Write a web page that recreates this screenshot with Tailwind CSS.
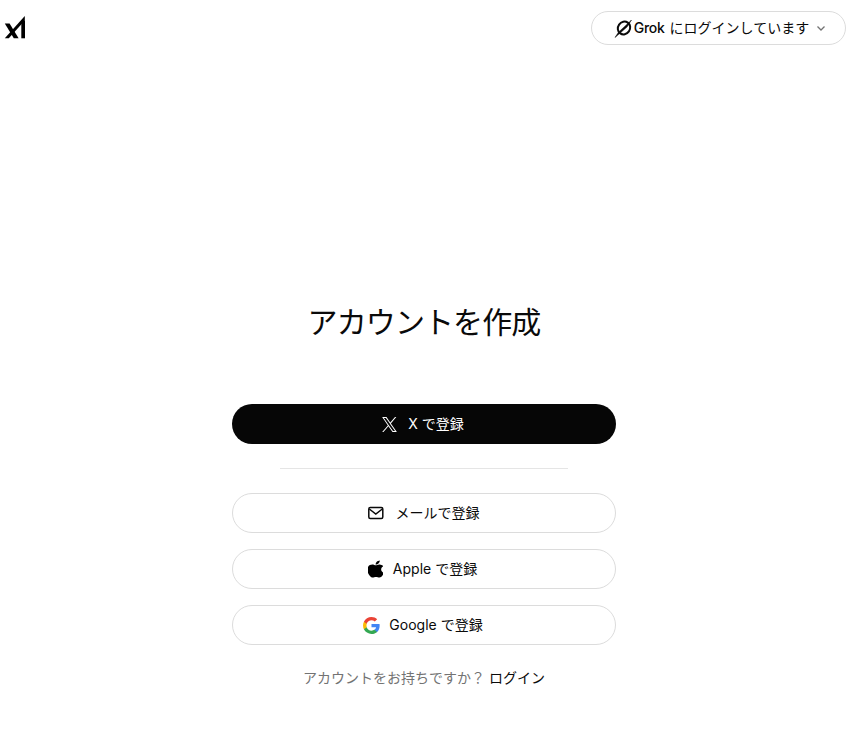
<!DOCTYPE html>
<html lang="ja">
  <head>
    <meta charset="UTF-8" />
    <meta name="viewport" content="width=device-width,initial-scale=1" />
    <title>アカウントを作成</title>
    <script src="https://cdn.jsdelivr.net/npm/@tailwindcss/browser@4"></script>
  </head>
  <body class="bg-white text-[#0a0a0a] font-['Inter','Noto_Sans_CJK_JP',sans-serif] h-[742px] overflow-hidden">
    <!-- Header -->
    <header class="flex items-start justify-between pt-[11px] pl-[4px] pr-[8px] h-[47px]">
      <svg class="mt-[5px]" width="22" height="23" viewBox="0 0 22 23" fill="#000">
        <path d="M0.800 7.500h4.800l9 14.800H9.800z" />
        <path d="M20.800 0 0.800 22.300h4L20.800 4.500z" />
        <path d="M17.300 5h3.700v17.300h-3.700z" />
      </svg>
      <button class="flex items-center justify-center w-[255px] h-[34px] pl-[3px] rounded-full border border-[#dcdcdc] text-sm">
        <svg class="mr-[1px]" width="19" height="19" viewBox="0 0 19 19" fill="none" stroke="#0a0a0a">
          <ellipse cx="10" cy="9" rx="6" ry="6.600" stroke-width="2" transform="rotate(35 10 9)" />
          <path d="M1 18.500 4.500 13.200 16.500 2 17.500 1 13 8z" fill="#0a0a0a" stroke-width="0.500" />
        </svg>
        <span class="font-medium tracking-[-0.3px]">Grok</span>
        <span class="ml-[5px]">にログインしています</span>
        <svg class="ml-[7px]" width="10" height="10" viewBox="0 0 10 10" fill="none" stroke="#737373" stroke-width="1.300">
          <path d="M1.500 3.500 5 7l3.500-3.500" />
        </svg>
      </button>
    </header>

    <main class="flex flex-col items-center w-[848px]">
      <h1 class="mt-[253px] text-[30px] leading-[44px] font-normal tracking-[-0.9px]">アカウントを作成</h1>

      <div class="mt-[60px] w-[384px] flex flex-col items-center">
        <button class="w-full h-[40px] pr-[2px] rounded-full bg-[#060606] text-white text-sm flex items-center justify-center gap-[11px]">
          <svg width="15" height="15" viewBox="0 0 24 24" fill="#fff">
            <path d="M14.200 10.300 22.900 0h-2.100l-7.600 8.900L7.200 0H.2l9.200 13.400L.2 24h2.100l8-9.300L16.800 24h7zM11.300 13.600l-.9-1.300L3 1.600h3.200l6 8.500.9 1.300 7.700 11h-3.200z" />
          </svg>
          <span>X で登録</span>
        </button>

        <div class="w-[288px] border-t border-[#e5e5e5] mt-[24px] mb-[24px]"></div>

        <div class="w-full flex flex-col gap-[16px]">
          <button class="w-full h-[40px] pr-[2px] rounded-full border border-[#dcdcdc] text-sm flex items-center justify-center gap-[11px]">
            <svg width="18" height="18" viewBox="0 0 18 18" fill="none" stroke="#0a0a0a" stroke-width="1.500">
              <rect x="1.800" y="3.500" width="14" height="11" rx="1.500" />
              <path d="m2.300 5 6.500 5 6.500-5" />
            </svg>
            <span>メールで登録</span>
          </button>
          <button class="w-full h-[40px] pr-[3px] rounded-full border border-[#dcdcdc] text-sm flex items-center justify-center gap-[10px]">
            <svg width="15" height="18" viewBox="20 20 340 470" fill="#000" preserveAspectRatio="none">
              <path d="M318.700 268.700c-.2-36.700 16.400-64.400 50-84.800-18.800-26.900-47.200-41.700-84.700-44.600-35.500-2.800-74.300 20.700-88.500 20.700-15 0-49.400-19.700-76.400-19.700C63.300 141.200 4 184.800 4 273.500q0 39.300 14.400 81.200c12.800 36.700 59 126.700 107.200 125.200 25.200-.6 43-17.900 75.800-17.900 31.800 0 48.300 17.900 76.400 17.900 48.600-.7 90.400-82.500 102.600-119.300-65.200-30.700-61.700-90-61.700-91.900zm-56.600-164.200c27.300-32.400 24.800-61.900 24-72.500-24.100 1.400-52 16.400-67.900 34.900-17.500 19.800-27.800 44.300-25.600 71.900 26.100 2 49.900-11.400 69.500-34.300z" />
            </svg>
            <span>Apple で登録</span>
          </button>
          <button class="w-full h-[40px] pr-[2px] rounded-full border border-[#dcdcdc] text-sm flex items-center justify-center gap-[9px]">
            <svg width="17" height="17" viewBox="0 0 24 24">
              <path fill="#4285F4" d="M23.500 12.300c0-.8-.1-1.600-.2-2.300H12v4.500h6.500c-.3 1.500-1.100 2.800-2.400 3.600v3h3.900c2.300-2.100 3.500-5.200 3.500-8.800z" />
              <path fill="#34A853" d="M12 24c3.200 0 6-1.100 8-2.900l-3.900-3c-1.100.7-2.500 1.200-4.100 1.200-3.100 0-5.800-2.100-6.700-5H1.300v3.100C3.300 21.300 7.300 24 12 24z" />
              <path fill="#FBBC05" d="M5.300 14.300c-.5-1.500-.5-3.100 0-4.600V6.600h-4c-1.700 3.300-1.700 7.500 0 10.800z" />
              <path fill="#EA4335" d="M12 4.700c1.800 0 3.300.6 4.600 1.800l3.400-3.400C17.900 1.200 15.200 0 12 0 7.300 0 3.300 2.700 1.300 6.600l4 3.100c.9-2.900 3.600-5 6.700-5z" />
            </svg>
            <span>Google で登録</span>
          </button>
        </div>

        <p class="mt-[23px] text-sm leading-[20px] text-[#737373]">
          アカウントをお持ちですか？<span class="text-[#0a0a0a] ml-[4px]">ログイン</span>
        </p>
      </div>
    </main>
  </body>
</html>
